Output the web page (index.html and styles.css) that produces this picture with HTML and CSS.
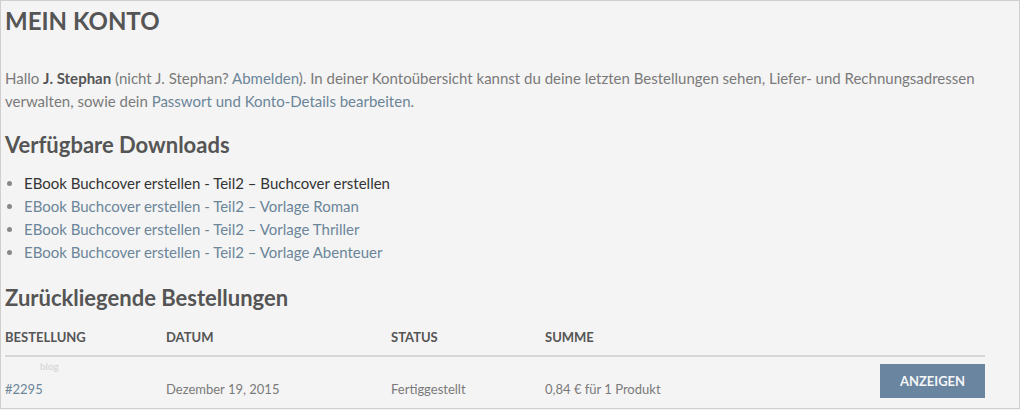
FILE: index.html
```html
<!DOCTYPE html>
<html lang="de">
<head>
<meta charset="utf-8">
<title>Mein Konto</title>
<link rel="stylesheet" href="styles.css">
</head>
<body>
<div class="page">
  <h1 class="title">MEIN KONTO</h1>
  <p class="intro">Hallo <strong>J. Stephan</strong> (nicht J. Stephan? <a href="#">Abmelden</a>). In deiner Kontoübersicht kannst du deine letzten Bestellungen sehen, Liefer- und Rechnungsadressen verwalten, sowie dein <a href="#">Passwort und Konto-Details bearbeiten</a>.</p>
  <h2 class="section">Verfügbare Downloads</h2>
  <ul class="downloads">
    <li class="current">EBook Buchcover erstellen - Teil2 – Buchcover erstellen</li>
    <li><a href="#">EBook Buchcover erstellen - Teil2 – Vorlage Roman</a></li>
    <li><a href="#">EBook Buchcover erstellen - Teil2 – Vorlage Thriller</a></li>
    <li><a href="#">EBook Buchcover erstellen - Teil2 – Vorlage Abenteuer</a></li>
  </ul>
  <h2 class="section orders-title">Zurückliegende Bestellungen</h2>
  <div class="orders">
    <div class="row head">
      <div class="c1">BESTELLUNG</div>
      <div class="c2">DATUM</div>
      <div class="c3">STATUS</div>
      <div class="c4">SUMME</div>
      <div class="c5"></div>
    </div>
    <div class="row body">
      <span class="wm">blog</span>
      <div class="c1 cell"><a href="#">#2295</a></div>
      <div class="c2 cell">Dezember 19, 2015</div>
      <div class="c3 cell">Fertiggestellt</div>
      <div class="c4 cell">0,84 € für 1 Produkt</div>
      <div class="c5"><a class="btn" href="#">ANZEIGEN</a></div>
    </div>
  </div>
</div>
</body>
</html>
```

FILE: styles.css
```css
html, body {
  margin: 0;
  padding: 0;
  background: #f4f4f4;
}
.page {
  box-sizing: border-box;
  width: 1020px;
  height: 409px;
  border: 1px solid #cfcfcf;
  padding: 0 4px;
  overflow: hidden;
  font-family: Lato, "Open Sans", sans-serif;
  color: #7a7a7a;
  font-size: 14px;
}
a {
  color: #6b8599;
  text-decoration: none;
}
.title {
  margin: 5px 0 0;
  font-size: 24px;
  font-weight: 700;
  color: #555;
  line-height: 30px;
}
.intro {
  margin: 31px 0 0;
  font-size: 15px;
  line-height: 23px;
}
.intro strong {
  color: #555;
}
.section {
  margin: 18px 0 0;
  font-size: 22px;
  font-weight: 700;
  color: #555;
  line-height: 28px;
}
.orders-title {
  margin-top: 20px;
}
.downloads {
  margin: 13px 0 0;
  padding: 0 0 0 19px;
  font-size: 15px;
  line-height: 23px;
}
.downloads li::marker {
  color: #888;
}
.downloads li.current {
  color: #333;
}
.orders {
  margin-top: 7px;
  width: 980px;
}
.row {
  display: flex;
  position: relative;
}
.row.head {
  height: 36px;
  align-items: center;
  border-bottom: 2px solid #d6d6d6;
  font-weight: 700;
  font-size: 13px;
  color: #555;
}
.row.body {
  height: 52px;
  align-items: flex-start;
  font-size: 13px;
}
.cell {
  padding-top: 24px;
  line-height: 16px;
}
.c1 { width: 161px; }
.c2 { width: 225px; }
.c3 { width: 154px; }
.c4 { flex: 1; }
.c5 { width: 105px; }
.btn {
  display: block;
  height: 34px;
  line-height: 34px;
  text-align: center;
  background: #6a85a0;
  color: #f4f6f8;
  font-size: 13px;
  font-weight: 700;
  margin-top: 7px;
}
.wm {
  position: absolute;
  left: 35px;
  top: 3px;
  font-size: 10px;
  color: #d2d2d2;
}
```
